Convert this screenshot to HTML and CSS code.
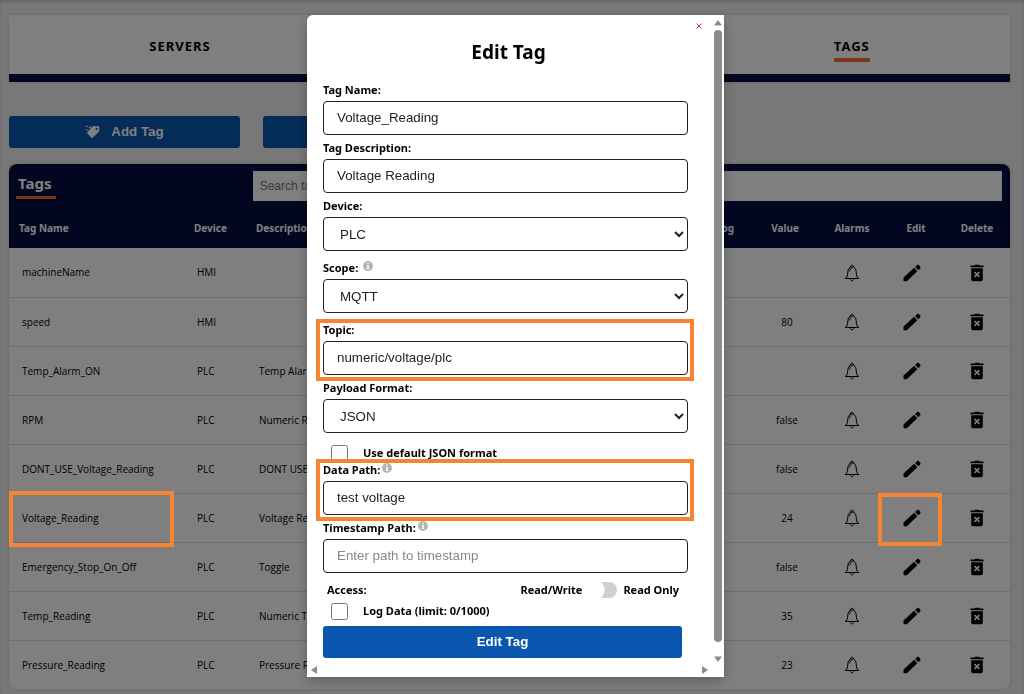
FILE: index.html
```html
<!DOCTYPE html>
<html lang="en">
<head>
<meta charset="utf-8">
<title>Tags</title>
<link rel="stylesheet" href="styles.css">
</head>
<body>
<svg class="sprite" aria-hidden="true">
  <symbol id="bell" viewBox="0 0 16 18"><path d="M1 14.5C3.500 13.500 3.600 11 3.800 8 4 4.800 5.500 3 8 3s4 1.800 4.200 5c.2 3 .3 5.500 2.800 6.500zM6.400 3.200C6 .6 10 .6 9.600 3.200M6.300 15.200c.6 2.200 2.800 2.200 3.400 0M5.500 7.500C5.700 6 6.300 4.800 7.500 4.300" fill="none" stroke="#000" stroke-width="1"/></symbol>
  <symbol id="pencil" viewBox="0 0 18 18"><path d="M.5 13.400 11.100 3.800l3.200 3.400L3.800 17.300H1.300q-.8 0-.8-.8zM12.100 2.900l1.900-1.700c.7-.6 1.500-.6 2 0l1.200 1.300c.5.600.5 1.300 0 1.900l-1.900 1.900z"/></symbol>
  <symbol id="trash" viewBox="0 0 14 18"><path fill-rule="evenodd" d="M.5 1.500h3.800L5 .8h4l.7.700h3.800v1.700H.5zM1.200 4.300h11.600v11.200q0 1.700-1.700 1.700H2.900q-1.700 0-1.700-1.700zM4 8.500 5.900 10.400 4 12.300l1.100 1.100L7 11.500l1.900 1.900 1.100-1.100-1.900-1.900L10 8.500 8.900 7.400 7 9.300 5.100 7.400z"/></symbol>
  <symbol id="info" viewBox="0 0 10 10"><circle cx="5" cy="5" r="5" fill="#b5b5b5"/><path d="M4.300 1.800h1.500v1.300H4.300zM3.800 4h2v3.200h.6V8H3.700v-.8h.6V4.800h-.5z" fill="#fff"/></symbol>
</svg>

<main class="page">
  <nav class="tabs">
    <a class="tab" href="#servers"><span>SERVERS</span></a>
    <a class="tab tab-blank" href="#devices" aria-label="Devices"></a>
    <a class="tab tab-active" href="#tags"><span>TAGS</span></a>
  </nav>

  <div class="actions">
    <button class="btn" type="button">
      <svg class="tag-icon" viewBox="0 0 16 16"><path fill-rule="evenodd" d="M3.500 7.500 9 2l5.300.3q1 0 1 1L15 8 8.500 14.500q-.9.900-1.800 0L2.500 10q-.8-1.200 1-2.500zM12.300 4a1.100 1.100 0 1 0 .1 0z"/><path d="M5.500 1.500 6 3l1.500.5L6 4l-.5 1.500L5 4l-1.500-.5L5 3zM2 1l.5 1 1 .5-1 .5L2 4l-.5-1-1-.5 1-.5zM2 5l.4.900.9.400-.9.400L2 7.500l-.4-.8-.9-.4.9-.4z"/></svg>
      Add Tag
    </button>
    <button class="btn" type="button" aria-label="Import"></button>
  </div>

  <section class="panel">
    <header class="panel-head">
      <h2 class="panel-title">Tags</h2>
      <input class="search" type="search" placeholder="Search tags" aria-label="Search tags">
    </header>
    <table class="tags">
      <colgroup><col class="c-name"><col class="c-device"><col><col class="c-log"><col class="c-value"><col class="c-alarms"><col class="c-edit"><col class="c-delete"></colgroup>
      <thead>
        <tr><th>Tag Name</th><th>Device</th><th>Description</th><th class="mid">Log</th><th class="mid">Value</th><th class="mid">Alarms</th><th class="mid">Edit</th><th class="mid">Delete</th></tr>
      </thead>
      <tbody id="rows"></tbody>
    </table>
  </section>
</main>

<div class="overlay">
  <div class="modal" role="dialog" aria-labelledby="dialog-title">
    <form class="form">
      <button class="close" type="button" aria-label="Close"><svg viewBox="0 0 6 6"><path d="M.5.500l5 5M5.500.500l-5 5"/></svg></button>
      <h1 class="title" id="dialog-title">Edit Tag</h1>
      <div class="field"><label for="name">Tag Name:</label><input id="name" type="text" value="Voltage_Reading"></div>
      <div class="field"><label for="desc">Tag Description:</label><input id="desc" type="text" value="Voltage Reading"></div>
      <div class="field"><label for="device">Device:</label><select id="device"><option>PLC</option></select></div>
      <div class="field field-spaced"><label for="scope">Scope: <svg class="info"><use href="#info"/></svg></label><select id="scope"><option>MQTT</option></select></div>
      <div class="field field-spaced marked"><label for="topic">Topic:</label><input id="topic" type="text" value="numeric/voltage/plc"></div>
      <div class="field"><label for="format">Payload Format:</label><select id="format"><option>JSON</option></select></div>
      <div class="check check-json"><input id="json" type="checkbox"><label for="json">Use default JSON format</label></div>
      <div class="field marked"><label for="path">Data Path:<svg class="info"><use href="#info"/></svg></label><input id="path" type="text" value="test voltage"></div>
      <div class="field"><label for="stamp">Timestamp Path:<svg class="info"><use href="#info"/></svg></label><input id="stamp" type="text" placeholder="Enter path to timestamp"></div>
      <div class="access">
        <span class="access-name">Access:</span>
        <span>Read/Write</span>
        <input class="toggle" id="readonly" type="checkbox" role="switch">
        <label for="readonly">Read Only</label>
      </div>
      <div class="check"><input id="log" type="checkbox"><label for="log">Log Data (limit: 0/1000)</label></div>
      <button class="btn submit" type="button">Edit Tag</button>
    </form>
    <div class="vscroll" aria-hidden="true">
      <svg viewBox="0 0 8 6"><path d="M4 0 8 5.500H0z"/></svg>
      <div class="thumb"></div>
      <svg viewBox="0 0 8 6"><path d="M4 6 0 .5h8z"/></svg>
    </div>
    <div class="hscroll" aria-hidden="true">
      <svg viewBox="0 0 6 8"><path d="M0 4 6 0v8z"/></svg>
      <svg viewBox="0 0 6 8"><path d="M6 4 0 0v8z"/></svg>
    </div>
  </div>
</div>
<script src="rows.js"></script>
</body>
</html>
```
FILE: rows.js
```js
const tags = [
  ["machineName", "HMI", "", ""],
  ["speed", "HMI", "", "80"],
  ["Temp_Alarm_ON", "PLC", "Temp Alarm", ""],
  ["RPM", "PLC", "Numeric RPM", "false"],
  ["DONT_USE_Voltage_Reading", "PLC", "DONT USE", "false"],
  ["Voltage_Reading", "PLC", "Voltage Reading", "24"],
  ["Emergency_Stop_On_Off", "PLC", "Toggle", "false"],
  ["Temp_Reading", "PLC", "Numeric Temp", "35"],
  ["Pressure_Reading", "PLC", "Pressure Reading", "23"]
];
const icon = (id, label) =>
  `<button class="icon-btn" type="button" aria-label="${label}"><svg class="${id}"><use href="#${id}"/></svg></button>`;
document.getElementById("rows").innerHTML = tags.map(([name, device, desc, value]) => {
  const mark = name === "Voltage_Reading";
  return `<tr>
    <td class="${mark ? "mark-name" : ""}">${name}</td><td>${device}</td><td>${desc}</td><td></td>
    <td class="value">${value}</td>
    <td class="mid">${icon("bell", "Alarms")}</td>
    <td class="edit ${mark ? "mark-edit" : ""}">${icon("pencil", "Edit")}</td>
    <td class="mid">${icon("trash", "Delete")}</td></tr>`;
}).join("");
```
FILE: styles.css
```css
* { box-sizing: border-box; }
body {
  margin: 0;
  min-height: 100vh;
  overflow: hidden;
  background: #f1f1f1;
  color: #000;
  font-family: "Noto Sans", "Open Sans", sans-serif;
  font-size: 10px;
  box-shadow: inset 0 2px 3px #ccc;
}
h1, h2 { margin: 0; }
.sprite { position: absolute; width: 0; height: 0; }
.page { padding: 15px 14px 0 9px; }

.tabs {
  display: flex;
  height: 67px;
  background: #fff;
  border-bottom: 8px solid #050d40;
  box-shadow: 0 0 3px #ccc;
}
.tab {
  flex: 1 1 auto;
  display: flex;
  justify-content: center;
  padding-top: 20px;
  color: #000;
  font-size: 13px;
  line-height: 22px;
  font-weight: 700;
  letter-spacing: 1px;
  text-decoration: none;
}
.tab-blank { padding: 0 31px; }
.tab span { height: 27px; }
.tab-active span { border-bottom: 4px solid #f26a2a; }

.actions { display: flex; gap: 23px; margin-top: 34px; }
.btn {
  display: flex;
  align-items: center;
  justify-content: center;
  gap: 11px;
  width: 231px;
  height: 32px;
  padding-bottom: 2px;
  border: 0;
  border-radius: 3px;
  background: #0b57b0;
  color: #fff;
  font-family: "Liberation Sans", Arial, sans-serif;
  font-weight: 700;
}
.tag-icon { width: 15px; height: 15px; fill: #fff; }

.panel {
  margin-top: 16px;
  background: #fff;
  border-radius: 8px;
  box-shadow: 0 0 4px #ccc;
}
.panel-head {
  display: flex;
  align-items: flex-start;
  justify-content: space-between;
  height: 46px;
  padding: 7px 8px 0 7px;
  background: #050d40;
  border-radius: 8px 8px 0 0;
}
.panel-title {
  padding: 0 5px 0 2px;
  border-bottom: 3px solid #f26a2a;
  color: #fff;
  font-size: 15px;
  line-height: 25px;
}
.search {
  width: 76%;
  height: 30px;
  padding: 0 7px;
  border: 0;
  border-radius: 0;
  background: #fff;
  font-family: "Liberation Sans", Arial, sans-serif;
  font-size: 12px;
}
.tags { width: 100%; table-layout: fixed; border-collapse: collapse; }
.c-name { width: 175px; }
.c-device { width: 62px; }
.c-log { width: 58px; }
.c-value { width: 62px; }
.c-alarms { width: 72px; }
.c-edit { width: 56px; }
.c-delete { width: 66px; }
.tags thead { background: #050d40; }
.tags th {
  height: 38px;
  padding: 0 0 2px 10px;
  color: #fff;
  font-size: 10px;
  text-align: left;
}
.tags td {
  height: 49px;
  padding: 0 0 0 13px;
  border-bottom: 1px solid #ddd;
  font-family: "Open Sans", "Noto Sans", sans-serif;
  white-space: nowrap;
}
.tags tr:last-child td { border-bottom: 0; }
.tags .mid { padding-left: 0; text-align: center; }
.tags .value { padding-left: 4px; text-align: center; }
.tags .edit { padding: 0 8px 0 0; text-align: center; }
.icon-btn { display: inline-flex; padding: 1px 0 0; border: 0; background: none; vertical-align: middle; }
.bell { width: 16px; height: 18px; }
.pencil { width: 18px; height: 18px; }
.trash { width: 14px; height: 18px; }
.mark-name, .mark-edit { position: relative; }
.mark-name::after, .mark-edit::after {
  content: "";
  position: absolute;
  z-index: 20;
  inset: -3px 10px -5px 0;
  border: 4px solid #f58433;
}
.mark-edit::after { inset: -1px 2px -4px -10px; }

.overlay {
  position: fixed;
  z-index: 10;
  inset: 0;
  display: flex;
  align-items: flex-start;
  justify-content: center;
  padding: 15px 0 0 7px;
  background: rgba(0, 0, 0, .5);
}
.modal {
  display: grid;
  grid-template-columns: 1fr 15px;
  width: 417px;
  background: #fff;
  border-radius: 6px 0 0 0;
  box-shadow: 0 4px 12px rgba(0, 0, 0, .25);
}
.form { display: flex; flex-direction: column; padding: 8px 21px 4px 16px; font-size: 11px; font-weight: 700; }
.form label, .access { line-height: 16px; }
.close { align-self: flex-end; display: flex; margin-right: -14px; padding: 0; border: 0; background: none; }
.close svg { width: 6px; height: 6px; stroke: #d93636; fill: none; }
.title { margin: 8px 0 15px; padding-left: 6px; font-size: 19px; line-height: 30px; text-align: center; }
.field { display: flex; flex-direction: column; gap: 3px; margin-bottom: 5px; position: relative; }
.field-spaced { margin-top: 4px; }
.field input, .field select {
  width: 100%;
  height: 34px;
  padding: 0 13px;
  border: 1px solid #222;
  border-radius: 4px;
  background: #fff;
  color: #222;
  font-family: "Liberation Sans", Arial, sans-serif;
}
.field input { padding-bottom: 2px; }
.field select { padding: 0 0 0 12px; }
.field input::placeholder { color: #888; }
.info { width: 10px; height: 10px; margin-left: 2px; vertical-align: 1px; }
.marked::after {
  content: "";
  position: absolute;
  inset: -3px -6px -6px -7px;
  border: 4px solid #f58433;
  pointer-events: none;
}
.check { display: flex; align-items: center; gap: 15px; height: 18px; padding-left: 8px; }
.check input { width: 17px; height: 17px; margin: 0; }
.check-json { margin-top: 6px; }
.access { display: flex; align-items: center; gap: 4px; margin: 4px 9px 4px 4px; }
.access-name { margin-right: auto; }
.toggle {
  appearance: none;
  width: 28px;
  height: 16px;
  margin: 0 2px 0 3px;
  border-radius: 8px;
  background: radial-gradient(circle at 5px 8px, #fff 10px, #d0d0d0 11px);
}
.submit { width: 359px; margin-top: 6px; }
.vscroll { display: flex; flex-direction: column; align-items: center; gap: 4px; padding: 5px 0 0 2px; }
.thumb { flex: 1; width: 8px; margin-bottom: 10px; border-radius: 4px; background: #8c8c8c; }
.vscroll svg { width: 8px; height: 6px; fill: #8c8c8c; }
.hscroll { display: flex; justify-content: space-between; padding: 4px 1px 3px 4px; }
.hscroll svg { width: 6px; height: 8px; fill: #8c8c8c; }
```
